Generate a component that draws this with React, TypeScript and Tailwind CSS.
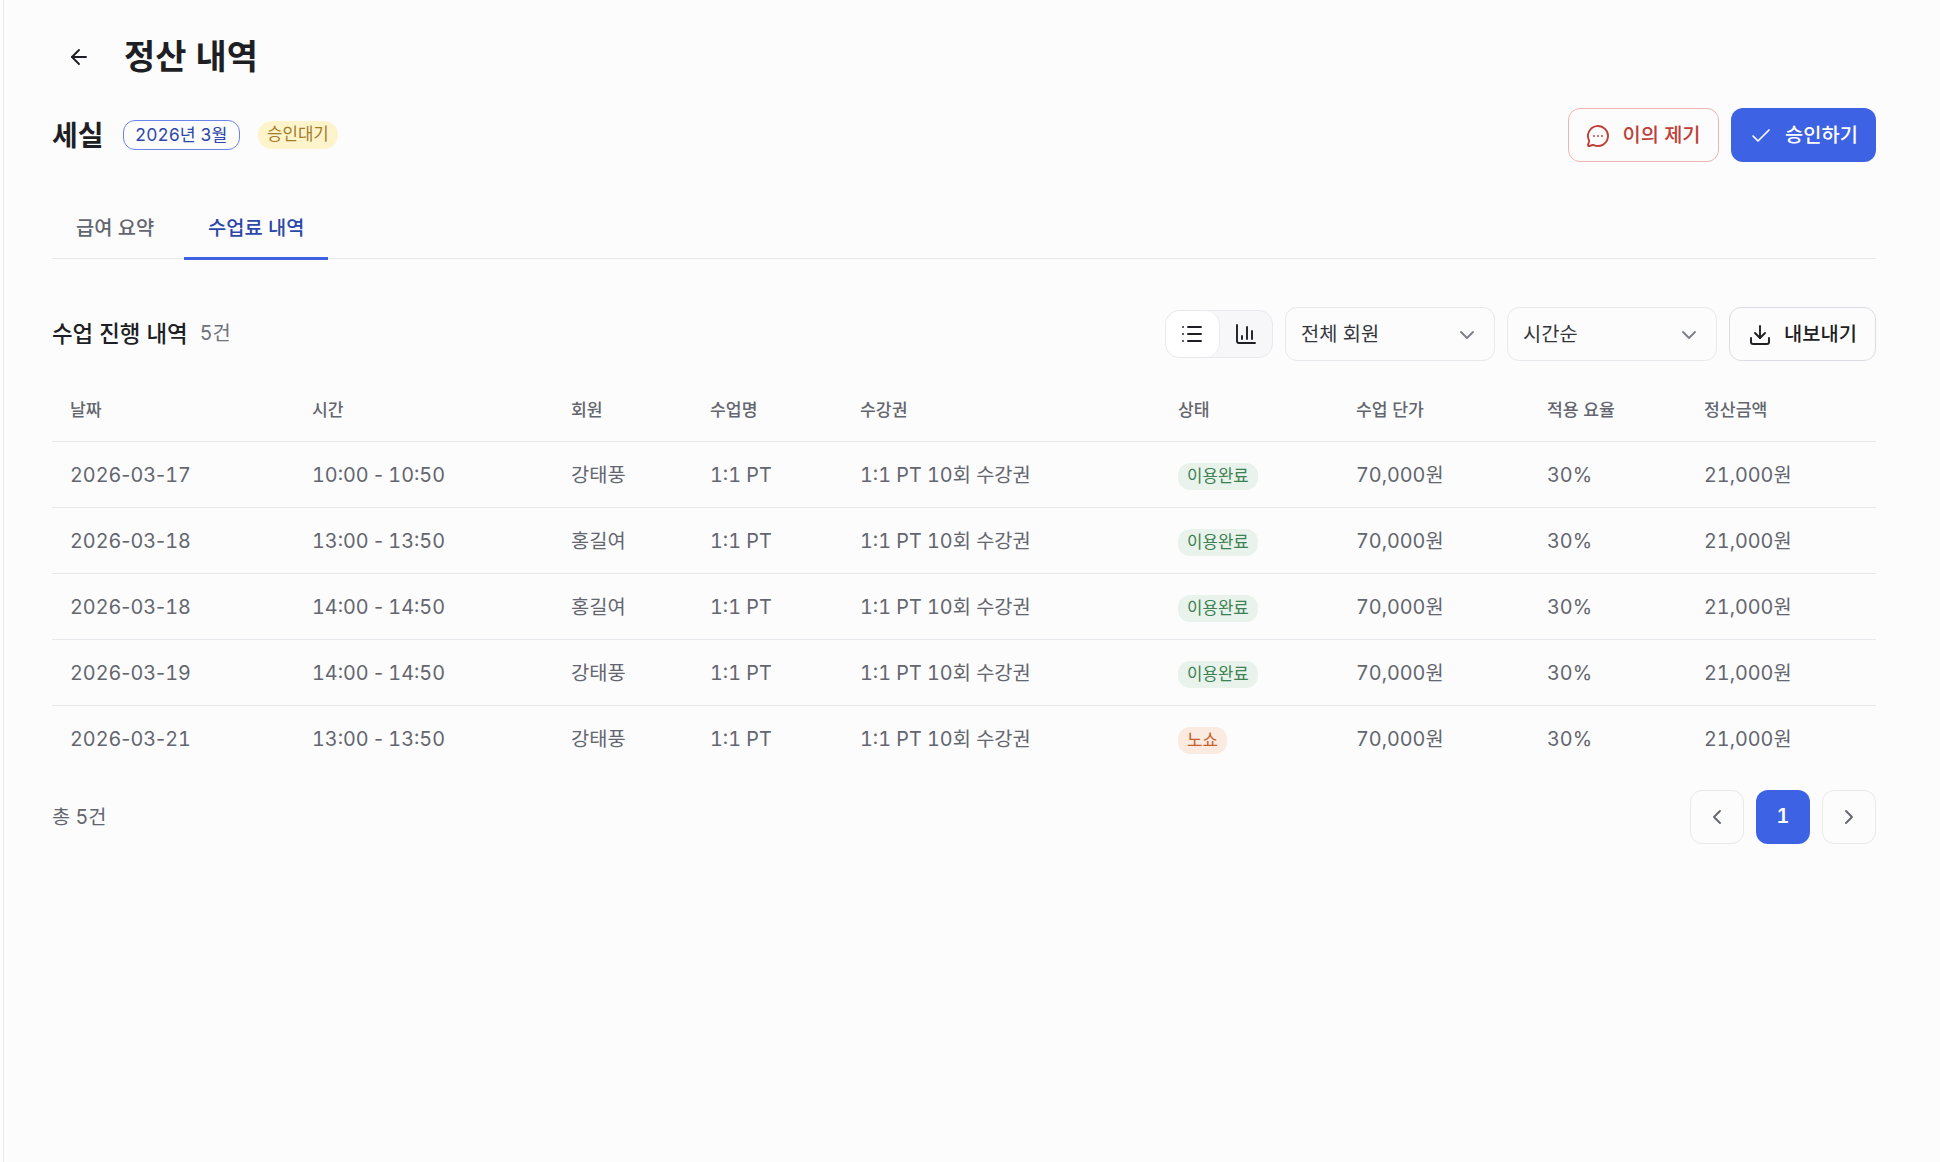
import { ArrowLeft, Check, ChevronDown, ChevronLeft, ChevronRight, ChartColumn, Download, List, MessageCircleMore } from "lucide-react";

const rows = [
  ["2026-03-17", "10:00 - 10:50", "강태풍", "이용완료"],
  ["2026-03-18", "13:00 - 13:50", "홍길여", "이용완료"],
  ["2026-03-18", "14:00 - 14:50", "홍길여", "이용완료"],
  ["2026-03-19", "14:00 - 14:50", "강태풍", "이용완료"],
  ["2026-03-21", "13:00 - 13:50", "강태풍", "노쇼"],
];

const heads = [
  ["날짜", "w-[242px]"],
  ["시간", "w-[259px]"],
  ["회원", "w-[139px]"],
  ["수업명", "w-[150px]"],
  ["수강권", "w-[318px]"],
  ["상태", "w-[178px]"],
  ["수업 단가", "w-[191px]"],
  ["적용 요율", "w-[157px]"],
  ["정산금액", "w-[190px]"],
];

function Hy({ text }: { text: string }) {
  const parts = text.split("-");
  return (
    <>
      {parts.map((p, i) => (
        <span key={i}>
          {i > 0 && <span className="normal-nums">-</span>}
          {p}
        </span>
      ))}
    </>
  );
}

export default function App() {
  return (
    <div className="min-h-[1162px] bg-[#fcfcfd] pl-[3px] font-['Inter','Noto_Sans_CJK_KR',sans-serif] text-[19.8px] tabular-nums text-[#63666e]">
      <div className="min-h-[1162px] border-l border-[#e8e9ec] pl-[48px] pr-[64px]">
        <header className="flex h-[108px] items-center pt-[5px]">
          <div className="flex w-[72px] items-center pl-[15px]">
            <ArrowLeft className="h-[24px] w-[24px] text-[#1d1f24]" strokeWidth={1.9} />
          </div>
          <h1 className="pt-[1px] text-[33.9px] font-bold text-[#1d1f24]">정산 내역</h1>
        </header>

        <div className="flex h-[54px] items-center justify-between">
          <div className="flex items-center">
            <span className="pt-[1px] text-[28px] font-bold text-[#1d1f24]">세실</span>
            <span className="ml-[19px] flex h-[30px] items-center rounded-[12px] border border-[#6a85ea] px-[11.5px] text-[17.3px] text-[#2c48a8]">2026년 3월</span>
            <span className="ml-[18px] flex h-[28px] items-center rounded-[14px] bg-[#fdf4cc] px-[9px] text-[16.8px] text-[#a47c28]">승인대기</span>
          </div>
          <div className="flex items-center gap-[12px]">
            <button className="flex h-[54px] w-[151px] items-center justify-center gap-[12px] rounded-[12px] border border-[#f0b4b2] pt-[1px] font-medium text-[#bf3f38]">
              <MessageCircleMore className="h-[24px] w-[24px]" strokeWidth={1.9} />
              이의 제기
            </button>
            <button className="flex h-[54px] w-[145px] items-center justify-center gap-[12px] rounded-[12px] bg-[#3d62e3] pt-[1px] font-medium text-white">
              <Check className="h-[24px] w-[24px]" strokeWidth={1.7} />
              승인하기
            </button>
          </div>
        </div>

        <nav className="mt-[44px] flex h-[53px] gap-[6px] border-b border-[#e8e9ec]">
          <button className="h-[53px] px-[24px] pb-[7px] font-medium text-[#63666e]">급여 요약</button>
          <button className="h-[54px] border-b-[3.5px] border-[#3d62e3] px-[24px] pb-[6px] font-medium text-[#2c48a8]">수업료 내역</button>
        </nav>

        <div className="mt-[48px] flex h-[54px] items-center justify-between">
          <div className="flex items-center gap-[12px]">
            <span className="text-[22.4px] font-medium text-[#1d1f24]">수업 진행 내역</span>
            <span className="text-[#6f727a]">5건</span>
          </div>
          <div className="flex items-center gap-[12px]">
            <div className="flex h-[48px] w-[108px] items-center rounded-[14px] border border-[#e8e9ec] bg-[#f7f7f9]">
              <span className="flex h-[46px] w-[53px] items-center justify-center rounded-[14px] bg-white pr-[2px] text-[#1d1f24] shadow-[1px_0_1px_rgba(0,0,0,0.05)]">
                <List className="h-[24px] w-[24px]" strokeWidth={1.9} />
              </span>
              <span className="flex w-[53px] items-center justify-center text-[#1d1f24]">
                <ChartColumn className="h-[24px] w-[24px]" strokeWidth={1.9} />
              </span>
            </div>
            <button className="flex h-[54px] w-[210px] items-center justify-between rounded-[12px] border border-[#e8e9ec] pl-[15px] pr-[15px] pt-[1px] text-[#33353b]">
              전체 회원
              <ChevronDown className="h-[24px] w-[24px] text-[#7c7f88]" strokeWidth={1.9} />
            </button>
            <button className="flex h-[54px] w-[210px] items-center justify-between rounded-[12px] border border-[#e8e9ec] pl-[15px] pr-[15px] pt-[1px] text-[#33353b]">
              시간순
              <ChevronDown className="h-[24px] w-[24px] text-[#7c7f88]" strokeWidth={1.9} />
            </button>
            <button className="flex h-[54px] w-[147px] items-center justify-center gap-[12px] rounded-[12px] border border-[#dcdde2] pt-[1px] font-medium text-[#1d1f24]">
              <Download className="h-[24px] w-[24px]" strokeWidth={1.9} />
              내보내기
            </button>
          </div>
        </div>

        <table className="mt-[14px] w-[1824px] table-fixed border-collapse">
          <colgroup>
            {heads.map(([h, w]) => (
              <col key={h} className={w} />
            ))}
          </colgroup>
          <thead>
            <tr className="h-[66px] border-b-[1.5px] border-[#e8e9ec]">
              {heads.map(([h]) => (
                <th key={h} className="px-[18px] pt-[4px] text-left text-[17.2px] font-medium text-[#63666e]">{h}</th>
              ))}
            </tr>
          </thead>
          <tbody>
            {rows.map((r, i) => (
              <tr key={i} className="h-[66px] border-b-[1.5px] border-[#e8e9ec] last:border-b-0">
                <td className="px-[18px] pt-[3px]"><Hy text={r[0]} /></td>
                <td className="px-[18px] pt-[3px]"><Hy text={r[1]} /></td>
                <td className="px-[18px] pt-[3px]">{r[2]}</td>
                <td className="px-[18px] pt-[3px]">1:1 PT</td>
                <td className="px-[18px] pt-[3px]">1:1 PT 10회 수강권</td>
                <td className="px-[18px] pt-[3px]">
                  {r[3] === "노쇼" ? (
                    <span className="inline-flex h-[27px] items-center rounded-[12px] bg-[#fbeadf] px-[9px] text-[16.8px] text-[#c8602c]">노쇼</span>
                  ) : (
                    <span className="inline-flex h-[27px] items-center rounded-[12px] bg-[#e9f3ec] px-[9px] text-[16.8px] text-[#3b8152]">이용완료</span>
                  )}
                </td>
                <td className="px-[18px] pt-[3px]">70,000원</td>
                <td className="px-[18px] pt-[3px]">30%</td>
                <td className="px-[18px] pt-[3px]">21,000원</td>
              </tr>
            ))}
          </tbody>
        </table>

        <div className="mt-[19px] flex h-[54px] items-center justify-between">
          <span className="pt-[1px] text-[#63666e]">총 5건</span>
          <div className="flex gap-[12px]">
            <button className="flex h-[54px] w-[54px] items-center justify-center rounded-[12px] border border-[#e8e9ec] text-[#63666e]">
              <ChevronLeft className="h-[24px] w-[24px]" strokeWidth={1.9} />
            </button>
            <button className="flex h-[54px] w-[54px] items-center justify-center rounded-[12px] bg-[#3d62e3] font-semibold text-white">1</button>
            <button className="flex h-[54px] w-[54px] items-center justify-center rounded-[12px] border border-[#e8e9ec] text-[#63666e]">
              <ChevronRight className="h-[24px] w-[24px]" strokeWidth={1.9} />
            </button>
          </div>
        </div>
      </div>
    </div>
  );
}
